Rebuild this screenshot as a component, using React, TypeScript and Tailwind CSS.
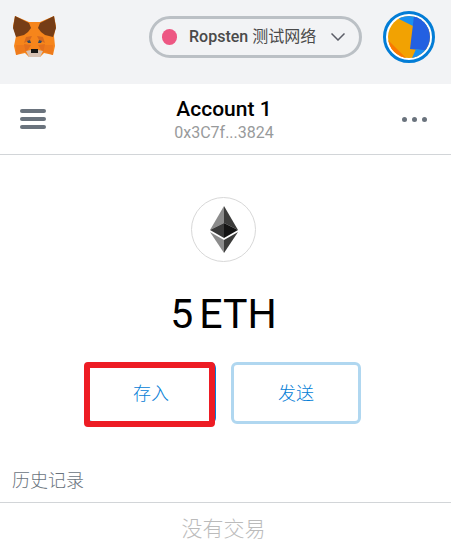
function FoxLogo() {
  return (
    <svg className="block h-[42px] w-11" viewBox="0 0 44 42" role="img" aria-label="MetaMask">
      <path d="M2 0 16 6h11L41 0l2 10-2 10 1 10-2 9-9-2-4 4H16l-4-4-9 2-2-9 2-10L0 10z" fill="#f6851b" />
      <path d="M2 0 16 7l2 5-3 4-4 3-8 2-3-9z" fill="#763d16" />
      <path d="M41 0 27 7l-2 5 3 4 4 3 8 2 3-9z" fill="#763d16" />
      <path d="m13 21 6-1-2 4-6 3zM30 21l-6-1 2 4 6 3z" fill="#d56a20" />
      <path d="M3 29h12l-2 6-10 4zM40 29H28l2 6 10 4z" fill="#ee7a1c" />
      <path d="m11 28 7 1-5 8zM32 28l-7 1 5 8z" fill="#e4701d" />
      <path d="m13 35 5-1h7l5 1-3 6H16z" fill="#d7c1b3" />
      <path d="m14 25 3-1 1 3h-3zM29 25l-3-1-1 3h3z" fill="#38485c" />
      <path d="M18 33h7v4h-7z" fill="#161616" />
    </svg>
  );
}

function AccountAvatar() {
  return (
    <svg className="block size-[42px] rounded-full" viewBox="0 0 42 42" aria-hidden="true">
      <path d="M0 0h42v42H0z" fill="#f2a202" />
      <path d="M8 0h34v14L25 10 9 2z" fill="#1890f2" />
      <path d="m26 0-4 33 20 2V0z" fill="#2360e1" />
      <path d="m28 33 14 2v7H24z" fill="#1890f2" />
      <path d="M0 24 18 42H0z" fill="#fa7900" />
    </svg>
  );
}

function EthereumLogo() {
  return (
    <svg className="block h-[47px] w-7" viewBox="0 0 28 47" role="img" aria-label="Ethereum">
      <path d="M14 0v17L0 24z" fill="#8c8c8c" />
      <path d="m14 0 14 24-14-7z" fill="#3c3c3b" />
      <path d="M14 17v15L0 24z" fill="#393939" />
      <path d="m14 17 14 7-14 8z" fill="#141414" />
      <path d="m0 26 14 8v13z" fill="#8c8c8c" />
      <path d="m28 26-14 8v13z" fill="#3c3c3b" />
    </svg>
  );
}

export default function App() {
  return (
    <div className="min-h-screen bg-white font-['Roboto','Noto_Sans_CJK_SC',sans-serif] text-black">
      <header className="flex h-[84px] items-start justify-between bg-[#f2f3f5] pr-4 pl-[13px]">
        <div className="pt-4">
          <FoxLogo />
        </div>
        <div className="flex gap-[21px] pt-[11px]">
          <button
            type="button"
            className="mt-[5px] flex h-[42px] w-[213px] items-center rounded-full border-3 border-[#bbc0c5] pl-2.5"
          >
            <span className="h-4 w-[15px] rounded-full bg-[#ed5783]" />
            <span className="ml-3 flex-1 text-left text-base leading-5 whitespace-nowrap text-[#4a4a4a]">
              <span className="font-medium">Ropsten</span> <span>测试网络</span>
            </span>
            <svg className="mr-3.5 h-2 w-3.5" viewBox="0 0 14 8" fill="none" stroke="#5b5d67" strokeWidth="1.500" aria-hidden="true">
              <path d="m0.500 0.500 6.500 6.500 6.500-6.500" />
            </svg>
          </button>
          <button
            type="button"
            aria-label="My accounts"
            className="flex size-[52px] items-center justify-center rounded-full border-3 border-[#037dd6] bg-white"
          >
            <AccountAvatar />
          </button>
        </div>
      </header>

      <main>
        <section className="flex h-[71px] items-center justify-between border-b border-[#d2d5d8] pr-6 pl-5">
          <button type="button" aria-label="Menu" className="flex w-[26px] flex-col gap-1">
            <span className="h-1 rounded-full bg-[#6a737d]" />
            <span className="h-1 rounded-full bg-[#6a737d]" />
            <span className="h-1 rounded-full bg-[#6a737d]" />
          </button>
          <button type="button" className="flex flex-col items-center pt-1">
            <span className="text-[21px] leading-6 font-medium">Account 1</span>
            <span className="text-base leading-6 text-[#989a9b]">0x3C7f...3824</span>
          </button>
          <button type="button" aria-label="Account options" className="flex gap-[5px]">
            <span className="size-[5px] rounded-full bg-[#6a737d]" />
            <span className="size-[5px] rounded-full bg-[#6a737d]" />
            <span className="size-[5px] rounded-full bg-[#6a737d]" />
          </button>
        </section>

        <section className="flex flex-col items-center pt-[42px] pr-1">
          <div className="flex size-[65px] items-center justify-center rounded-full border border-[#d8d8d8]">
            <EthereumLogo />
          </div>
          <p className="mt-7 flex gap-1.5 text-[41px] leading-12">
            <span>5</span> <span>ETH</span>
          </p>
          <div className="mt-6 flex gap-[15px] text-lg leading-7 font-light text-[#037dd6]">
            <div className="relative">
              <button type="button" className="h-[62px] w-[130px] rounded-md border-3 border-[#037dd6] pt-0.5">
                存入
              </button>
              <span className="pointer-events-none absolute top-0 right-px -bottom-[3px] -left-0.5 rounded-sm border-6 border-[#ed1c24]" />
            </div>
            <button type="button" className="h-[62px] w-[130px] rounded-md border-3 border-[#b0d7f0] pt-0.5">
              发送
            </button>
          </div>
        </section>

        <section className="font-light">
          <h2 className="border-b border-[#d2d5d8] px-3 pt-[43px] pb-[7px] text-lg leading-7 text-[#6a737d]">历史记录</h2>
          <p className="pt-3 pr-1 text-center text-[21px] leading-7 text-[#bbbbbb]">没有交易</p>
        </section>
      </main>
    </div>
  );
}
